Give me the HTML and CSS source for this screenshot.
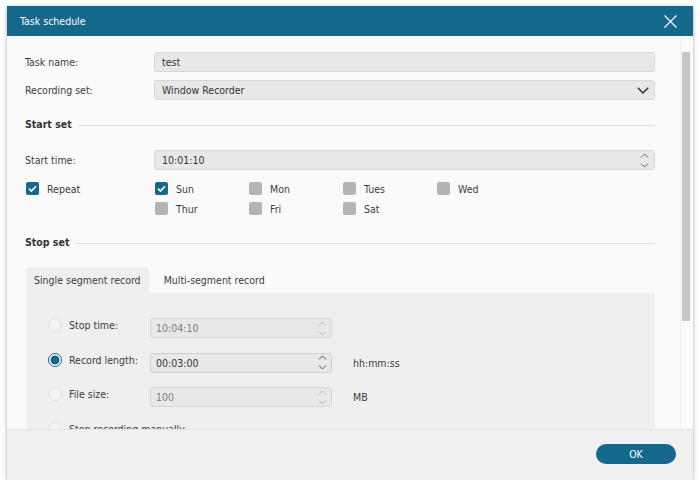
FILE: index.html
```html
<!DOCTYPE html>
<html>
<head>
<meta charset="utf-8">
<title>Task schedule</title>
<link rel="stylesheet" href="styles.css">
</head>
<body>
<div class="window">
  <div class="titlebar">
    <span class="title">Task schedule</span>
    <svg class="close" width="13" height="13" viewBox="0 0 13 13"><path d="M0.5 0.5L12.5 12.5M12.5 0.5L0.5 12.5" stroke="#fff" stroke-width="1.2" fill="none"/></svg>
  </div>
  <div class="body">
    <div class="content">
      <div class="form-row">
        <span class="lbl">Task name:</span>
        <div class="field">test</div>
      </div>
      <div class="form-row gap">
        <span class="lbl">Recording set:</span>
        <div class="field">
          <span class="grow">Window Recorder</span>
          <svg class="caret" width="12" height="7" viewBox="0 0 12 7"><path d="M0.8 0.8L6 6L11.2 0.8" stroke="#333" stroke-width="1.5" fill="none"/></svg>
        </div>
      </div>

      <div class="section first">Start set</div>

      <div class="form-row start">
        <span class="lbl">Start time:</span>
        <div class="field">
          <span class="grow">10:01:10</span>
          <svg class="spinarrows" width="9" height="15" viewBox="0 0 9 15"><path d="M1 4.5L4.5 1L8 4.5M1 10.5L4.5 14L8 10.5" stroke="#666" stroke-width="1" fill="none"/></svg>
        </div>
      </div>

      <div class="checks">
        <div class="repeat">
          <span class="chk"><span class="box on"><svg width="13" height="13" viewBox="0 0 13 13"><path d="M3 6.6L5.4 9L10 4.2" stroke="#fff" stroke-width="1.6" fill="none"/></svg></span>Repeat</span>
        </div>
        <div class="days">
          <span class="chk"><span class="box on"><svg width="13" height="13" viewBox="0 0 13 13"><path d="M3 6.6L5.4 9L10 4.2" stroke="#fff" stroke-width="1.6" fill="none"/></svg></span>Sun</span>
          <span class="chk"><span class="box"></span>Mon</span>
          <span class="chk"><span class="box"></span>Tues</span>
          <span class="chk"><span class="box"></span>Wed</span>
          <span class="chk"><span class="box"></span>Thur</span>
          <span class="chk"><span class="box"></span>Fri</span>
          <span class="chk"><span class="box"></span>Sat</span>
        </div>
      </div>

      <div class="section second">Stop set</div>

      <div class="tabs">
        <span class="tab active">Single segment record</span>
        <span class="tab">Multi-segment record</span>
      </div>
      <div class="panel">
        <div class="opt">
          <span class="opt-lbl"><span class="radio"></span>Stop time:</span>
          <div class="spin disabled">
            <span class="grow">10:04:10</span>
            <svg class="spinarrows" width="9" height="15" viewBox="0 0 9 15"><path d="M1 4.5L4.5 1L8 4.5M1 10.5L4.5 14L8 10.5" stroke="#b4b4b4" stroke-width="1" fill="none"/></svg>
          </div>
        </div>
        <div class="opt">
          <span class="opt-lbl"><span class="radio on"></span>Record length:</span>
          <div class="spin">
            <span class="grow">00:03:00</span>
            <svg class="spinarrows" width="9" height="15" viewBox="0 0 9 15"><path d="M1 4.5L4.5 1L8 4.5M1 10.5L4.5 14L8 10.5" stroke="#555" stroke-width="1" fill="none"/></svg>
          </div>
          <span class="unit">hh:mm:ss</span>
        </div>
        <div class="opt">
          <span class="opt-lbl"><span class="radio"></span>File size:</span>
          <div class="spin disabled">
            <span class="grow">100</span>
            <svg class="spinarrows" width="9" height="15" viewBox="0 0 9 15"><path d="M1 4.5L4.5 1L8 4.5M1 10.5L4.5 14L8 10.5" stroke="#b4b4b4" stroke-width="1" fill="none"/></svg>
          </div>
          <span class="unit">MB</span>
        </div>
        <div class="opt">
          <span class="opt-lbl wide"><span class="radio"></span>Stop recording manually</span>
        </div>
      </div>
    </div>
    <div class="scrollbar"><div class="thumb"></div></div>
  </div>
  <div class="footer">
    <button class="ok">OK</button>
  </div>
</div>
</body>
</html>
```
FILE: styles.css
```css
* { box-sizing: border-box; }
html, body { margin: 0; padding: 0; background: #fff; }
body {
  font-family: "DejaVu Sans Condensed", "DejaVu Sans", sans-serif;
  font-size: 10.5px;
  color: #3c3c3c;
}
.window {
  margin: 6px 0 0 7px;
  width: 686px;
  height: 474px;
  display: flex;
  flex-direction: column;
  background: #fafafa;
  box-shadow: 0 1px 4px rgba(0, 0, 0, 0.35);
}
.titlebar {
  height: 30px;
  flex: none;
  background: #13688c;
  color: #fff;
  display: flex;
  align-items: center;
  justify-content: space-between;
  padding: 0 16px 0 13px;
}
.close { display: block; }
.body { flex: 1; display: flex; min-height: 0; }
.content {
  flex: 1;
  min-width: 0;
  overflow: hidden;
  padding: 16px 25px 0 18px;
}
.scrollbar {
  width: 13px;
  flex: none;
  border-left: 1px solid #efefef;
  padding: 16px 0 0 1px;
}
.thumb { width: 8px; height: 269px; background: #c6c6c6; }
.footer {
  height: 51px;
  flex: none;
  background: #f0f0f0;
  border-top: 1px solid #e2e2e2;
  display: flex;
  justify-content: flex-end;
  align-items: flex-start;
  padding: 14px 17px 0 0;
}
.ok {
  width: 80px;
  height: 20px;
  border-radius: 10px;
  background: #13688c;
  color: #fff;
  border: 0;
  font: inherit;
  padding: 0;
}
.form-row { display: flex; align-items: center; height: 20px; }
.form-row.gap { margin-top: 8px; }
.form-row.start { margin-top: 19px; }
.lbl { width: 129px; flex: none; }
.field {
  flex: 1;
  height: 20px;
  border: 1px solid #d6d6d6;
  border-radius: 3px;
  background: #e8e8e8;
  padding: 0 5px 0 7px;
  display: flex;
  align-items: center;
  color: #333;
}
.grow { flex: 1; }
.caret, .spinarrows { display: block; flex: none; }
.section {
  display: flex;
  align-items: center;
  gap: 6px;
  font-weight: bold;
  height: 14px;
  color: #333;
}
.section::after { content: ""; flex: 1; height: 1px; background: #dddddd; margin-top: 2px; }
.section.first { margin-top: 17px; }
.section.second { margin-top: 20px; }
.checks { display: flex; margin-top: 12px; padding-left: 1px; }
.repeat { width: 129px; flex: none; }
.days {
  display: grid;
  grid-template-columns: repeat(4, 94px);
  row-gap: 7px;
}
.chk { display: flex; align-items: center; gap: 8px; height: 13px; }
.box {
  width: 13px;
  height: 13px;
  border-radius: 2px;
  background: #b4b4b4;
  flex: none;
}
.box svg { display: block; }
.box.on { background: #13688c; }
.tabs { display: flex; margin: 18px 0 0 1px; height: 26px; }
.tab { padding: 0 8px; line-height: 26px; }
.tab.active { background: #efefef; border-radius: 3px 3px 0 0; }
.tab + .tab { margin-left: 7px; }
.panel {
  background: #efefef;
  margin-left: 1px;
  padding: 25px 0 0 22px;
  display: flex;
  flex-direction: column;
  gap: 14.5px;
  height: 200px;
}
.opt { display: flex; align-items: flex-start; height: 20px; flex: none; }
.opt-lbl {
  display: flex;
  align-items: center;
  gap: 7px;
  width: 102px;
  height: 14px;
  flex: none;
}
.opt-lbl.wide { width: auto; }
.radio {
  width: 14px;
  height: 14px;
  border-radius: 50%;
  border: 1px solid #dedede;
  background: #f3f3f3;
  flex: none;
}
.radio.on {
  border: 1px solid #13688c;
  background: radial-gradient(circle, #13688c 0 4.2px, #fff 4.8px);
}
.spin {
  width: 182px;
  height: 20px;
  border: 1px solid #cfcfcf;
  border-radius: 3px;
  background: #e8e8e8;
  display: flex;
  align-items: center;
  padding: 0 4px 0 5px;
  color: #333;
  flex: none;
}
.spin.disabled { color: #808080; border-color: #d6d6d6; }
.unit { margin-left: 21px; align-self: center; }
```
